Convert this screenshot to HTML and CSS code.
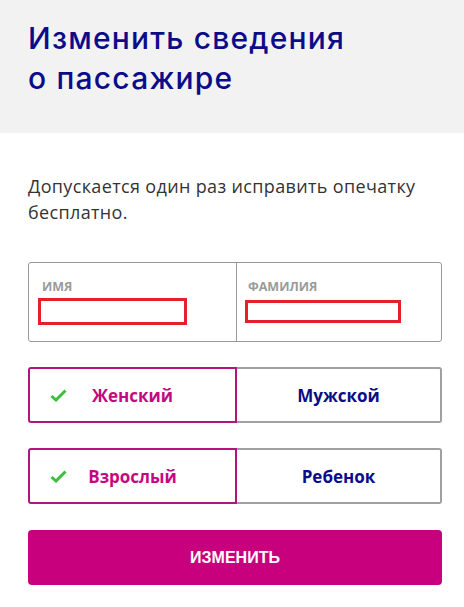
FILE: index.html
```html
<!DOCTYPE html>
<html lang="ru">
<head>
    <meta charset="UTF-8">
    <meta name="viewport" content="width=device-width, initial-scale=1.0">
    <title>Изменить сведения о пассажире</title>
    <link rel="stylesheet" href="styles.css">
</head>
<body>
    <div class="header">
        <h1>Изменить сведения<br>о пассажире</h1>
    </div>

    <div class="content">
        <p class="note">Допускается один раз исправить опечатку бесплатно.</p>

        <div class="names">
            <div class="name-field">
                <label>ИМЯ</label>
                <div class="redacted first"></div>
            </div>
            <div class="name-field">
                <label>ФАМИЛИЯ</label>
                <div class="redacted last"></div>
            </div>
        </div>

        <div class="toggle">
            <div class="option selected">
                <svg class="check" width="17" height="13" viewBox="0 0 17 13"><path d="M1.5 7 L6 11 L15.5 1.5" fill="none" stroke="#3dbf3d" stroke-width="3"/></svg>
                <span>Женский</span>
            </div>
            <div class="option">
                <span>Мужской</span>
            </div>
        </div>

        <div class="toggle">
            <div class="option selected">
                <svg class="check" width="17" height="13" viewBox="0 0 17 13"><path d="M1.5 7 L6 11 L15.5 1.5" fill="none" stroke="#3dbf3d" stroke-width="3"/></svg>
                <span>Взрослый</span>
            </div>
            <div class="option">
                <span>Ребенок</span>
            </div>
        </div>

        <button class="submit">ИЗМЕНИТЬ</button>
    </div>
</body>
</html>
```

FILE: styles.css
```css
body {
    margin: 0;
    padding: 0;
    background-color: #fff;
    font-family: 'Open Sans', sans-serif;
    color: #333;
}
.header {
    background-color: #f2f2f2;
    padding: 18px 28px 0;
    box-sizing: border-box;
    height: 133px;
}
.header h1 {
    margin: 0;
    font-family: 'Inter', sans-serif;
    font-weight: 500;
    font-size: 30px;
    line-height: 40px;
    color: #0c0c8a;
    letter-spacing: 1.2px;
}
.content {
    padding: 0 22px 0 28px;
}
.note {
    margin: 40px 0 0;
    font-size: 18px;
    line-height: 26px;
    letter-spacing: 0.35px;
    color: #333;
    padding-right: 10px;
}
.names {
    margin-top: 37px;
    display: grid;
    grid-template-columns: 207px 1fr;
    border: 1px solid #999;
    border-radius: 3px;
    height: 78px;
}
.name-field {
    padding: 16px 10px 0 13px;
}
.name-field + .name-field {
    border-left: 1px solid #999;
}
.name-field label {
    display: block;
    font-size: 12.5px;
    font-weight: 700;
    color: #9a9a9a;
    line-height: 16px;
}
.name-field + .name-field label {
    margin-left: -2px;
}
.redacted {
    border: 3px solid #e5202a;
    box-sizing: border-box;
}
.redacted.first {
    width: 149px;
    height: 27px;
    margin: 3px 0 0 -4px;
}
.redacted.last {
    width: 156px;
    height: 23px;
    margin: 5px 0 0 -5px;
}
.toggle {
    margin-top: 25px;
    display: grid;
    grid-template-columns: 209px 1fr;
    height: 56px;
}
.option {
    display: flex;
    align-items: center;
    justify-content: center;
    border: 2px solid #a0a0a0;
    border-left: none;
    border-radius: 0 3px 3px 0;
    font-weight: 700;
    font-size: 17px;
    color: #0c0c8a;
    position: relative;
}
.option.selected {
    border: 2px solid #b3137d;
    border-radius: 3px 0 0 3px;
    color: #c4087f;
}
.option .check {
    position: absolute;
    left: 20px;
    top: 20px;
}
.submit {
    display: block;
    width: 100%;
    margin-top: 26px;
    height: 55px;
    border: none;
    border-radius: 4px;
    background-color: #c8007e;
    color: #fff;
    font-family: 'Liberation Sans', Arial, sans-serif;
    font-weight: 700;
    font-size: 16px;
    cursor: pointer;
}
```
